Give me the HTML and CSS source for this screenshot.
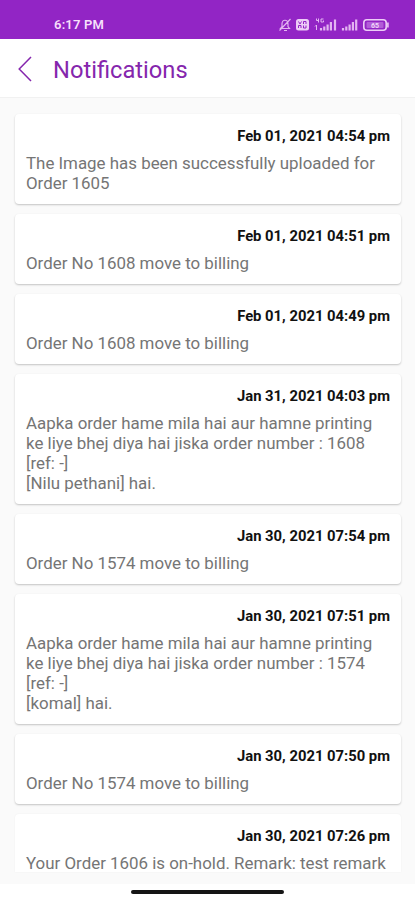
FILE: index.html
```html
<!DOCTYPE html>
<html lang="en">
<head>
<meta charset="utf-8">
<title>Notifications</title>
<link rel="stylesheet" href="styles.css">
</head>
<body>
<div class="screen">
  <div class="status">
    <span class="clock">6:17 PM</span>
    <svg class="status-icons" width="112" height="18" viewBox="0 0 112 18" fill="none" stroke="#e3b5f1" stroke-width="1.2">
      <path d="M2.500 12.500h9l-1.500-2V8c0-5-6-5-6 0v2.500zM6 14.500h3M1.500 14.500L12.500 3"/>
      <rect x="18" y="3" width="13" height="11.500" rx="2.500" fill="#edccf7" stroke="none"/>
      <path d="M20.500 5.500l1.500 2.500L23.500 5.500M25.500 8V5.500h2.500v2.500M20.500 12V9.500h2.500v2.500M25.500 9.500v2.500h2.500V9.500" stroke="#9225c5" stroke-width="1"/>
      <path d="M38.500 2.500v2h2M40.500 2.500v4M45.500 3H43V6h2.500V4.500M38.500 9v5M37 10.500l1.500-1.500" stroke-width="1"/>
      <path d="M43 14.500v-2.500M46.300 14.500v-4M49.600 14.500v-6M52.900 14.500v-8.500M57 14.500V3.500M65 14.500v-2.500M68.300 14.500v-4M71.600 14.500v-6M74.900 14.500v-8.500M78.200 14.500V3.500" stroke-width="2.200"/>
      <rect x="85.800" y="3.800" width="22.400" height="10.400" rx="3" stroke="#edccf7" stroke-width="1.600"/>
      <path d="M109.800 6.500v5" stroke-width="2"/>
      <rect x="88.500" y="6" width="17" height="6" rx="1" fill="#b25bd8" stroke="none"/>
      <text class="battery" x="97" y="11.600">65</text>
    </svg>
  </div>
  <header class="bar">
    <svg class="back" width="14" height="26" viewBox="0 0 14 26" fill="none" stroke="#8526ad" stroke-width="1.500"><path d="M13 1L1.200 13L13 25"/></svg>
    <h1>Notifications</h1>
  </header>
  <main class="list">
    <article class="card"><time>Feb 01, 2021 04:54 pm</time><p>The Image has been successfully uploaded for<br>Order 1605</p></article>
    <article class="card"><time>Feb 01, 2021 04:51 pm</time><p>Order No 1608 move to billing</p></article>
    <article class="card"><time>Feb 01, 2021 04:49 pm</time><p>Order No 1608 move to billing</p></article>
    <article class="card"><time>Jan 31, 2021 04:03 pm</time><p>Aapka order hame mila hai aur hamne printing<br>ke liye bhej diya hai jiska order number : 1608<br>[ref: -]<br>[Nilu pethani] hai.</p></article>
    <article class="card"><time>Jan 30, 2021 07:54 pm</time><p>Order No 1574 move to billing</p></article>
    <article class="card"><time>Jan 30, 2021 07:51 pm</time><p>Aapka order hame mila hai aur hamne printing<br>ke liye bhej diya hai jiska order number : 1574<br>[ref: -]<br>[komal] hai.</p></article>
    <article class="card"><time>Jan 30, 2021 07:50 pm</time><p>Order No 1574 move to billing</p></article>
    <article class="card cut"><time>Jan 30, 2021 07:26 pm</time><p>Your Order 1606 is on-hold. Remark: test remark</p></article>
  </main>
  <div class="nav"><div class="home"></div></div>
</div>
</body>
</html>
```
FILE: styles.css
```css
* { box-sizing: border-box; }
body { margin: 0; font-family: Roboto, sans-serif; background: #fff; }
.screen { width: 415px; height: 900px; display: flex; flex-direction: column; overflow: hidden; }
.status {
  height: 39px; flex: none; background: #9225c5; color: #f6dffb;
  display: flex; justify-content: space-between; align-items: flex-end; padding: 0 25px 5px 54px;
}
.clock { font-size: 13px; font-weight: 600; line-height: 18px; letter-spacing: 0.2px; }
.battery { font-size: 7px; font-weight: 700; fill: #f0d5f8; stroke: none; text-anchor: middle; }
.bar {
  height: 58px; flex: none; background: #fff; display: flex; align-items: center;
  padding: 1px 18px 0; gap: 21px;
}
.bar h1 { margin: 0; font-size: 23.7px; line-height: 30px; font-weight: 400; color: #8526ad; padding-top: 2px; }
.list {
  height: 787px; flex: none; background: #fafafa; border-top: 1px solid #f1f1f1;
  padding: 16px 14px 12px 15px; display: flex; flex-direction: column; gap: 10px; overflow: hidden;
}
.card {
  flex: none; background: #fff; border-radius: 4px; padding: 12px 11px 11px;
  box-shadow: 0 1px 2px rgba(0, 0, 0, 0.22);
}
.cut { height: 58px; padding-bottom: 0; border-radius: 4px 4px 0 0; box-shadow: 0 0 2px rgba(0, 0, 0, 0.06); overflow: hidden; }
.card time { display: block; text-align: right; font-size: 14.8px; line-height: 20px; font-weight: 700; color: #111; margin-bottom: 7px; white-space: nowrap; }
.card p { margin: 0; font-size: 16.9px; line-height: 20px; color: #757575; white-space: nowrap; }
.nav { height: 16px; flex: none; background: #fff; display: flex; justify-content: center; padding-top: 6px; }
.home { width: 153px; height: 4px; border-radius: 2px; background: #151515; }
```
